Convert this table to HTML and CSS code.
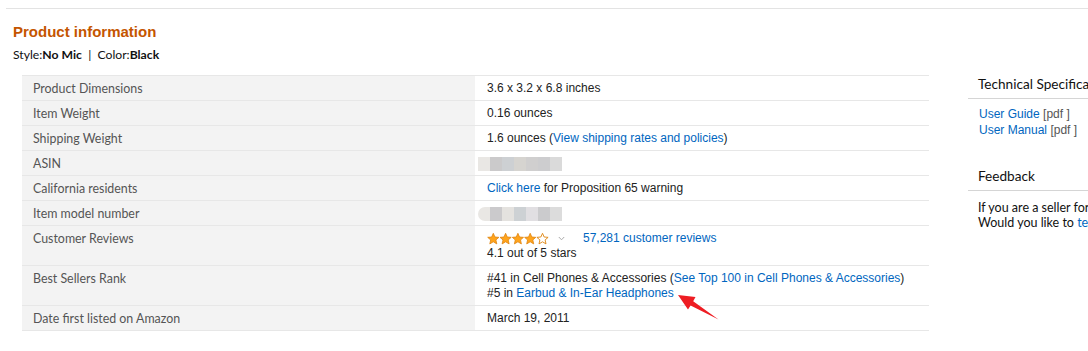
FILE: index.html
```html
<!DOCTYPE html>
<html>
<head>
<meta charset="utf-8">
<link rel="stylesheet" href="styles.css">
</head>
<body>
<div class="page">
  <div class="divider"></div>
  <div class="content">
    <h2 class="title">Product information</h2>
    <div class="variation">Style:<b>No Mic</b>&nbsp;&nbsp;|&nbsp;&nbsp;Color:<b>Black</b></div>
    <div class="columns">
      <table class="details">
        <tr><th>Product Dimensions</th><td>3.6 x 3.2 x 6.8 inches</td></tr>
        <tr><th>Item Weight</th><td>0.16 ounces</td></tr>
        <tr><th>Shipping Weight</th><td>1.6 ounces (<a href="#">View shipping rates and policies</a>)</td></tr>
        <tr><th>ASIN</th><td><span class="blur"><i style="background:#e9e7e4"></i><i style="background:#cbcacb"></i><i style="background:#cdd0d3"></i><i style="background:#d6d4d0"></i><i style="background:#d0cfcf"></i><i style="background:#cdcdcf"></i><i style="background:#dadada"></i></span></td></tr>
        <tr><th>California residents</th><td><a href="#">Click here</a> for Proposition 65 warning</td></tr>
        <tr><th>Item model number</th><td><span class="blur round"><i style="background:#e9e7e4"></i><i style="background:#cbcacc"></i><i style="background:#e4e2df"></i><i style="background:#cdd1d4"></i><i style="background:#e1dfe2"></i><i style="background:#cbcbcd"></i><i style="background:#dcdcdc"></i></span></td></tr>
        <tr class="tall"><th>Customer Reviews</th><td>
          <div class="rating">
            <svg class="stars" width="63" height="13" viewBox="0 0 63 13">
              <defs>
                <path id="st" d="M6 0.5 L7.65 4.2 L11.6 4.55 L8.6 7.15 L9.5 11.1 L6 9 L2.5 11.1 L3.4 7.15 L0.4 4.55 L4.35 4.2 Z"/>
              </defs>
              <use href="#st" x="0.3" y="0.8" fill="#ffa41c" stroke="#de8410" stroke-width="0.8"/>
              <use href="#st" x="12.6" y="0.8" fill="#ffa41c" stroke="#de8410" stroke-width="0.8"/>
              <use href="#st" x="24.9" y="0.8" fill="#ffa41c" stroke="#de8410" stroke-width="0.8"/>
              <use href="#st" x="37.2" y="0.8" fill="#ffa41c" stroke="#de8410" stroke-width="0.8"/>
              <use href="#st" x="49.5" y="0.8" fill="none" stroke="#de8410" stroke-width="0.9"/>
            </svg>
            <svg class="chev" width="7" height="5" viewBox="0 0 7 5"><path d="M0.8 1 L3.5 3.8 L6.2 1" fill="none" stroke="#aaa" stroke-width="1"/></svg>
            <a href="#" class="reviews">57,281 customer reviews</a>
          </div>
          <div>4.1 out of 5 stars</div>
        </td></tr>
        <tr class="tall"><th>Best Sellers Rank</th><td class="rank">
          <div>#41 in Cell Phones &amp; Accessories (<a href="#">See Top 100 in Cell Phones &amp; Accessories</a>)</div>
          <div>#5 in <a href="#">Earbud &amp; In-Ear Headphones</a></div>
          <svg class="arrow" width="50" height="36" viewBox="0 0 50 36"><polygon points="6,7 23.5,9 21.2,13.3 46.5,31.5 18.6,17.5 16,21.5" fill="#ee1d23"/></svg>
        </td></tr>
        <tr><th>Date first listed on Amazon</th><td>March 19, 2011</td></tr>
      </table>
      <div class="sidebar">
        <h3>Technical Specification</h3>
        <div class="docs">
          <div><a href="#">User Guide</a> <span class="pdf">[pdf ]</span></div>
          <div><a href="#">User Manual</a> <span class="pdf">[pdf ]</span></div>
        </div>
        <h3 class="fb">Feedback</h3>
        <div class="fbtext">
          <div>If you are a seller for this product,</div>
          <div>Would you like to <a href="#">tell us</a></div>
        </div>
      </div>
    </div>
  </div>
</div>
</body>
</html>
```

FILE: styles.css
```css
html, body {
  margin: 0;
  padding: 0;
  background: #fff;
  overflow: hidden;
}
.page {
  width: 1088px;
  height: 351px;
  overflow: hidden;
  padding-left: 6px;
  padding-top: 8px;
  box-sizing: border-box;
  font-family: "Liberation Sans", Arial, sans-serif;
}
.divider {
  height: 1px;
  background: #e3e3e3;
  width: 1200px;
}
.content {
  padding-left: 7px;
}
.title {
  margin: 14px 0 0;
  font-family: "Liberation Sans", Arial, sans-serif;
  font-size: 15px;
  line-height: 18px;
  font-weight: bold;
  color: #c45500;
}
.variation {
  margin-top: 6px;
  font-family: Lato, sans-serif;
  font-size: 12.2px;
  line-height: 16px;
  color: #111;
}
.variation b { font-weight: bold; }
.columns {
  display: flex;
  margin-top: 12px;
  width: 1300px;
}
.details {
  margin-left: 9px;
  border-collapse: collapse;
  width: 907px;
  flex-shrink: 0;
  align-self: flex-start;
}
.details tr {
  border-top: 1px solid #e7e7e7;
  border-bottom: 1px solid #e7e7e7;
}
.details th {
  width: 431px;
  background: #f3f3f3;
  text-align: left;
  font-weight: normal;
  font-family: Lato, sans-serif;
  font-size: 12.4px;
  color: #555;
  padding: 5px 11px 4px;
  line-height: 15px;
  vertical-align: top;
}
.details td {
  font-size: 12px;
  line-height: 15px;
  color: #222;
  padding: 5px 12px 4px;
  vertical-align: top;
}
a {
  color: #0066c0;
  text-decoration: none;
}
.blur {
  display: inline-flex;
  margin-left: -9px;
  margin-top: 1px;
  filter: blur(0.6px);
  vertical-align: top;
}
.blur i {
  display: block;
  width: 12px;
  height: 14px;
}
.blur.round i:first-child { border-radius: 7px 0 0 7px; }
.rating {
  display: flex;
  align-items: center;
}
.stars { display: block; }
.chev { display: block; margin-left: 8px; }
.reviews { margin-left: 18px; }
.rank { position: relative; }
.arrow {
  position: absolute;
  left: 197px;
  top: 22px;
}
.sidebar {
  margin-left: 39px;
  width: 300px;
  flex-shrink: 0;
}
.sidebar h3 {
  margin: 0;
  padding: 0 0 5px 10px;
  font-family: Lato, sans-serif;
  font-weight: normal;
  font-size: 13.6px;
  line-height: 18px;
  color: #111;
  border-bottom: 1px solid #d5d5d5;
  white-space: nowrap;
}
.docs {
  margin-top: 7px;
  padding-left: 11px;
  font-size: 12px;
  line-height: 16px;
}
.pdf { color: #555; }
.sidebar h3.fb { margin-top: 29px; }
.fbtext {
  margin-top: 9px;
  padding-left: 10px;
  font-family: Lato, sans-serif;
  font-size: 12.5px;
  line-height: 15px;
  color: #111;
  white-space: nowrap;
}
```
